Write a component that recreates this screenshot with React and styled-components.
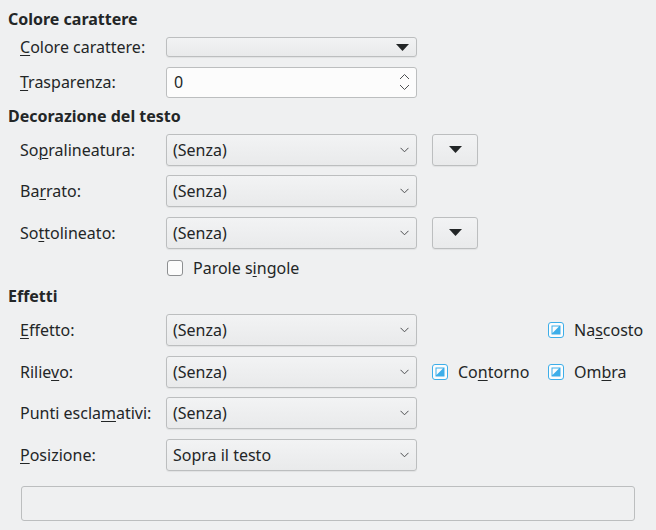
import React from "react";
import styled, { createGlobalStyle } from "styled-components";

const Global = createGlobalStyle`
  html, body {
    margin: 0;
    padding: 0;
    background: #eff0f1;
  }
  body {
    font-family: "Noto Sans", "DejaVu Sans", sans-serif;
    font-size: 16px;
    color: #232627;
  }
`;

const Page = styled.div`
  width: 656px;
  height: 530px;
  box-sizing: border-box;
  padding: 9px 0 0 8px;
  background: #eff0f1;
`;

const Section = styled.section`
  margin-bottom: 8px;
`;

const Heading = styled.h2`
  margin: 0 0 8px 0;
  font-size: 16px;
  font-weight: 700;
  line-height: 20px;
`;

const Grid = styled.div`
  display: grid;
  grid-template-columns: 146px 251px ${(p) => p.$extra || "auto"} auto;
  row-gap: 9.5px;
  padding-left: 12px;
  align-items: center;
`;

const Label = styled.label`
  line-height: 20px;
  white-space: nowrap;
`;

const Mn = styled.span`
  text-decoration: underline;
  text-underline-offset: 2px;
  text-decoration-thickness: 1px;
`;

const Combo = styled.div`
  height: ${(p) => p.$h || 32}px;
  box-sizing: border-box;
  display: flex;
  align-items: center;
  justify-content: space-between;
  padding: 0 7px 0 6px;
  border: 1px solid #bcbebf;
  border-radius: 3px;
  background: linear-gradient(#f2f3f4, #e9eaeb);
  box-shadow: 0 1px 1px rgba(0, 0, 0, 0.06);
  white-space: nowrap;
  line-height: 20px;
`;

const SpinBox = styled.div`
  height: 31px;
  box-sizing: border-box;
  display: flex;
  align-items: center;
  justify-content: space-between;
  padding: 0 6px 0 7px;
  border: 1px solid #bcbebf;
  border-radius: 3px;
  background: #fcfcfc;
  line-height: 20px;
`;

const ColorButton = styled.div`
  width: 46px;
  height: 32px;
  margin-left: 15px;
  box-sizing: border-box;
  display: flex;
  align-items: center;
  justify-content: center;
  border: 1px solid #bcbebf;
  border-radius: 3px;
  background: linear-gradient(#f2f3f4, #e9eaeb);
  box-shadow: 0 1px 1px rgba(0, 0, 0, 0.06);
`;

const Check = styled.div`
  display: flex;
  align-items: center;
  gap: 10px;
  height: 20px;
  line-height: 20px;
  padding-left: ${(p) => p.$pad || 0}px;
  white-space: nowrap;
`;

const Box = styled.span`
  width: 16px;
  height: 16px;
  box-sizing: border-box;
  border: 1px solid #8d8f91;
  border-radius: 3px;
  background: #fcfcfc;
`;

const Preview = styled.div`
  margin: 15px 0 0 13px;
  width: 614px;
  height: 35px;
  box-sizing: border-box;
  border: 1px solid #bcbebf;
  border-radius: 3px;
  background: #eff0f1;
`;

const Chevron = () => (
  <svg width="9" height="6" viewBox="0 0 9 6">
    <path d="M0.5 0.8 L4.5 4.8 L8.5 0.8" fill="none" stroke="#4d4f51" strokeWidth="1" />
  </svg>
);

const Triangle = () => (
  <svg width="13" height="7" viewBox="0 0 13 7">
    <path d="M0 0 H13 L6.5 7 Z" fill="#232627" />
  </svg>
);

const Spinner = () => (
  <svg width="11" height="22" viewBox="0 0 11 22">
    <path d="M1 8 L5.5 3.5 L10 8" fill="none" stroke="#4d4f51" strokeWidth="1" />
    <path d="M1 14 L5.5 18.5 L10 14" fill="none" stroke="#4d4f51" strokeWidth="1" />
  </svg>
);

const TriState = () => (
  <svg width="16" height="16" viewBox="0 0 16 16">
    <rect x="0.5" y="0.5" width="15" height="15" rx="2.5" fill="#fcfcfc" stroke="#3daee9" />
    <rect x="3.5" y="3.5" width="9" height="9" fill="#3daee9" />
    <path d="M4.5 4.5 H11 L4.5 11 Z" fill="#fcfcfc" />
  </svg>
);

const Select = ({ value }) => (
  <Combo>
    <span>{value}</span>
    <Chevron />
  </Combo>
);

const TriCheck = ({ children, pad }) => (
  <Check $pad={pad}>
    <TriState />
    <span>{children}</span>
  </Check>
);

export default function App() {
  return (
    <>
      <Global />
      <Page>
        <Section>
          <Heading>Colore carattere</Heading>
          <Grid>
            <Label><Mn>C</Mn>olore carattere:</Label>
            <Combo $h={20}>
              <span />
              <Triangle />
            </Combo>
            <span />
            <span />
            <Label><Mn>T</Mn>rasparenza:</Label>
            <SpinBox>
              <span>0</span>
              <Spinner />
            </SpinBox>
          </Grid>
        </Section>

        <Section>
          <Heading>Decorazione del testo</Heading>
          <Grid>
            <Label>So<Mn>p</Mn>ralineatura:</Label>
            <Select value="(Senza)" />
            <ColorButton><Triangle /></ColorButton>
            <span />
            <Label>Ba<Mn>r</Mn>rato:</Label>
            <Select value="(Senza)" />
            <span />
            <span />
            <Label>So<Mn>t</Mn>tolineato:</Label>
            <Select value="(Senza)" />
            <ColorButton><Triangle /></ColorButton>
            <span />
            <span />
            <Check $pad={1}>
              <Box />
              <span>Parole s<Mn>i</Mn>ngole</span>
            </Check>
          </Grid>
        </Section>

        <Section>
          <Heading>Effetti</Heading>
          <Grid $extra="116px">
            <Label><Mn>E</Mn>ffetto:</Label>
            <Select value="(Senza)" />
            <span />
            <TriCheck pad={15}>Na<Mn>s</Mn>costo</TriCheck>
            <Label>Rilie<Mn>v</Mn>o:</Label>
            <Select value="(Senza)" />
            <TriCheck pad={15}>Co<Mn>n</Mn>torno</TriCheck>
            <TriCheck pad={15}>Om<Mn>b</Mn>ra</TriCheck>
            <Label>Punti escla<Mn>m</Mn>ativi:</Label>
            <Select value="(Senza)" />
            <span />
            <span />
            <Label><Mn>P</Mn>osizione:</Label>
            <Select value="Sopra il testo" />
          </Grid>
        </Section>

        <Preview />
      </Page>
    </>
  );
}
